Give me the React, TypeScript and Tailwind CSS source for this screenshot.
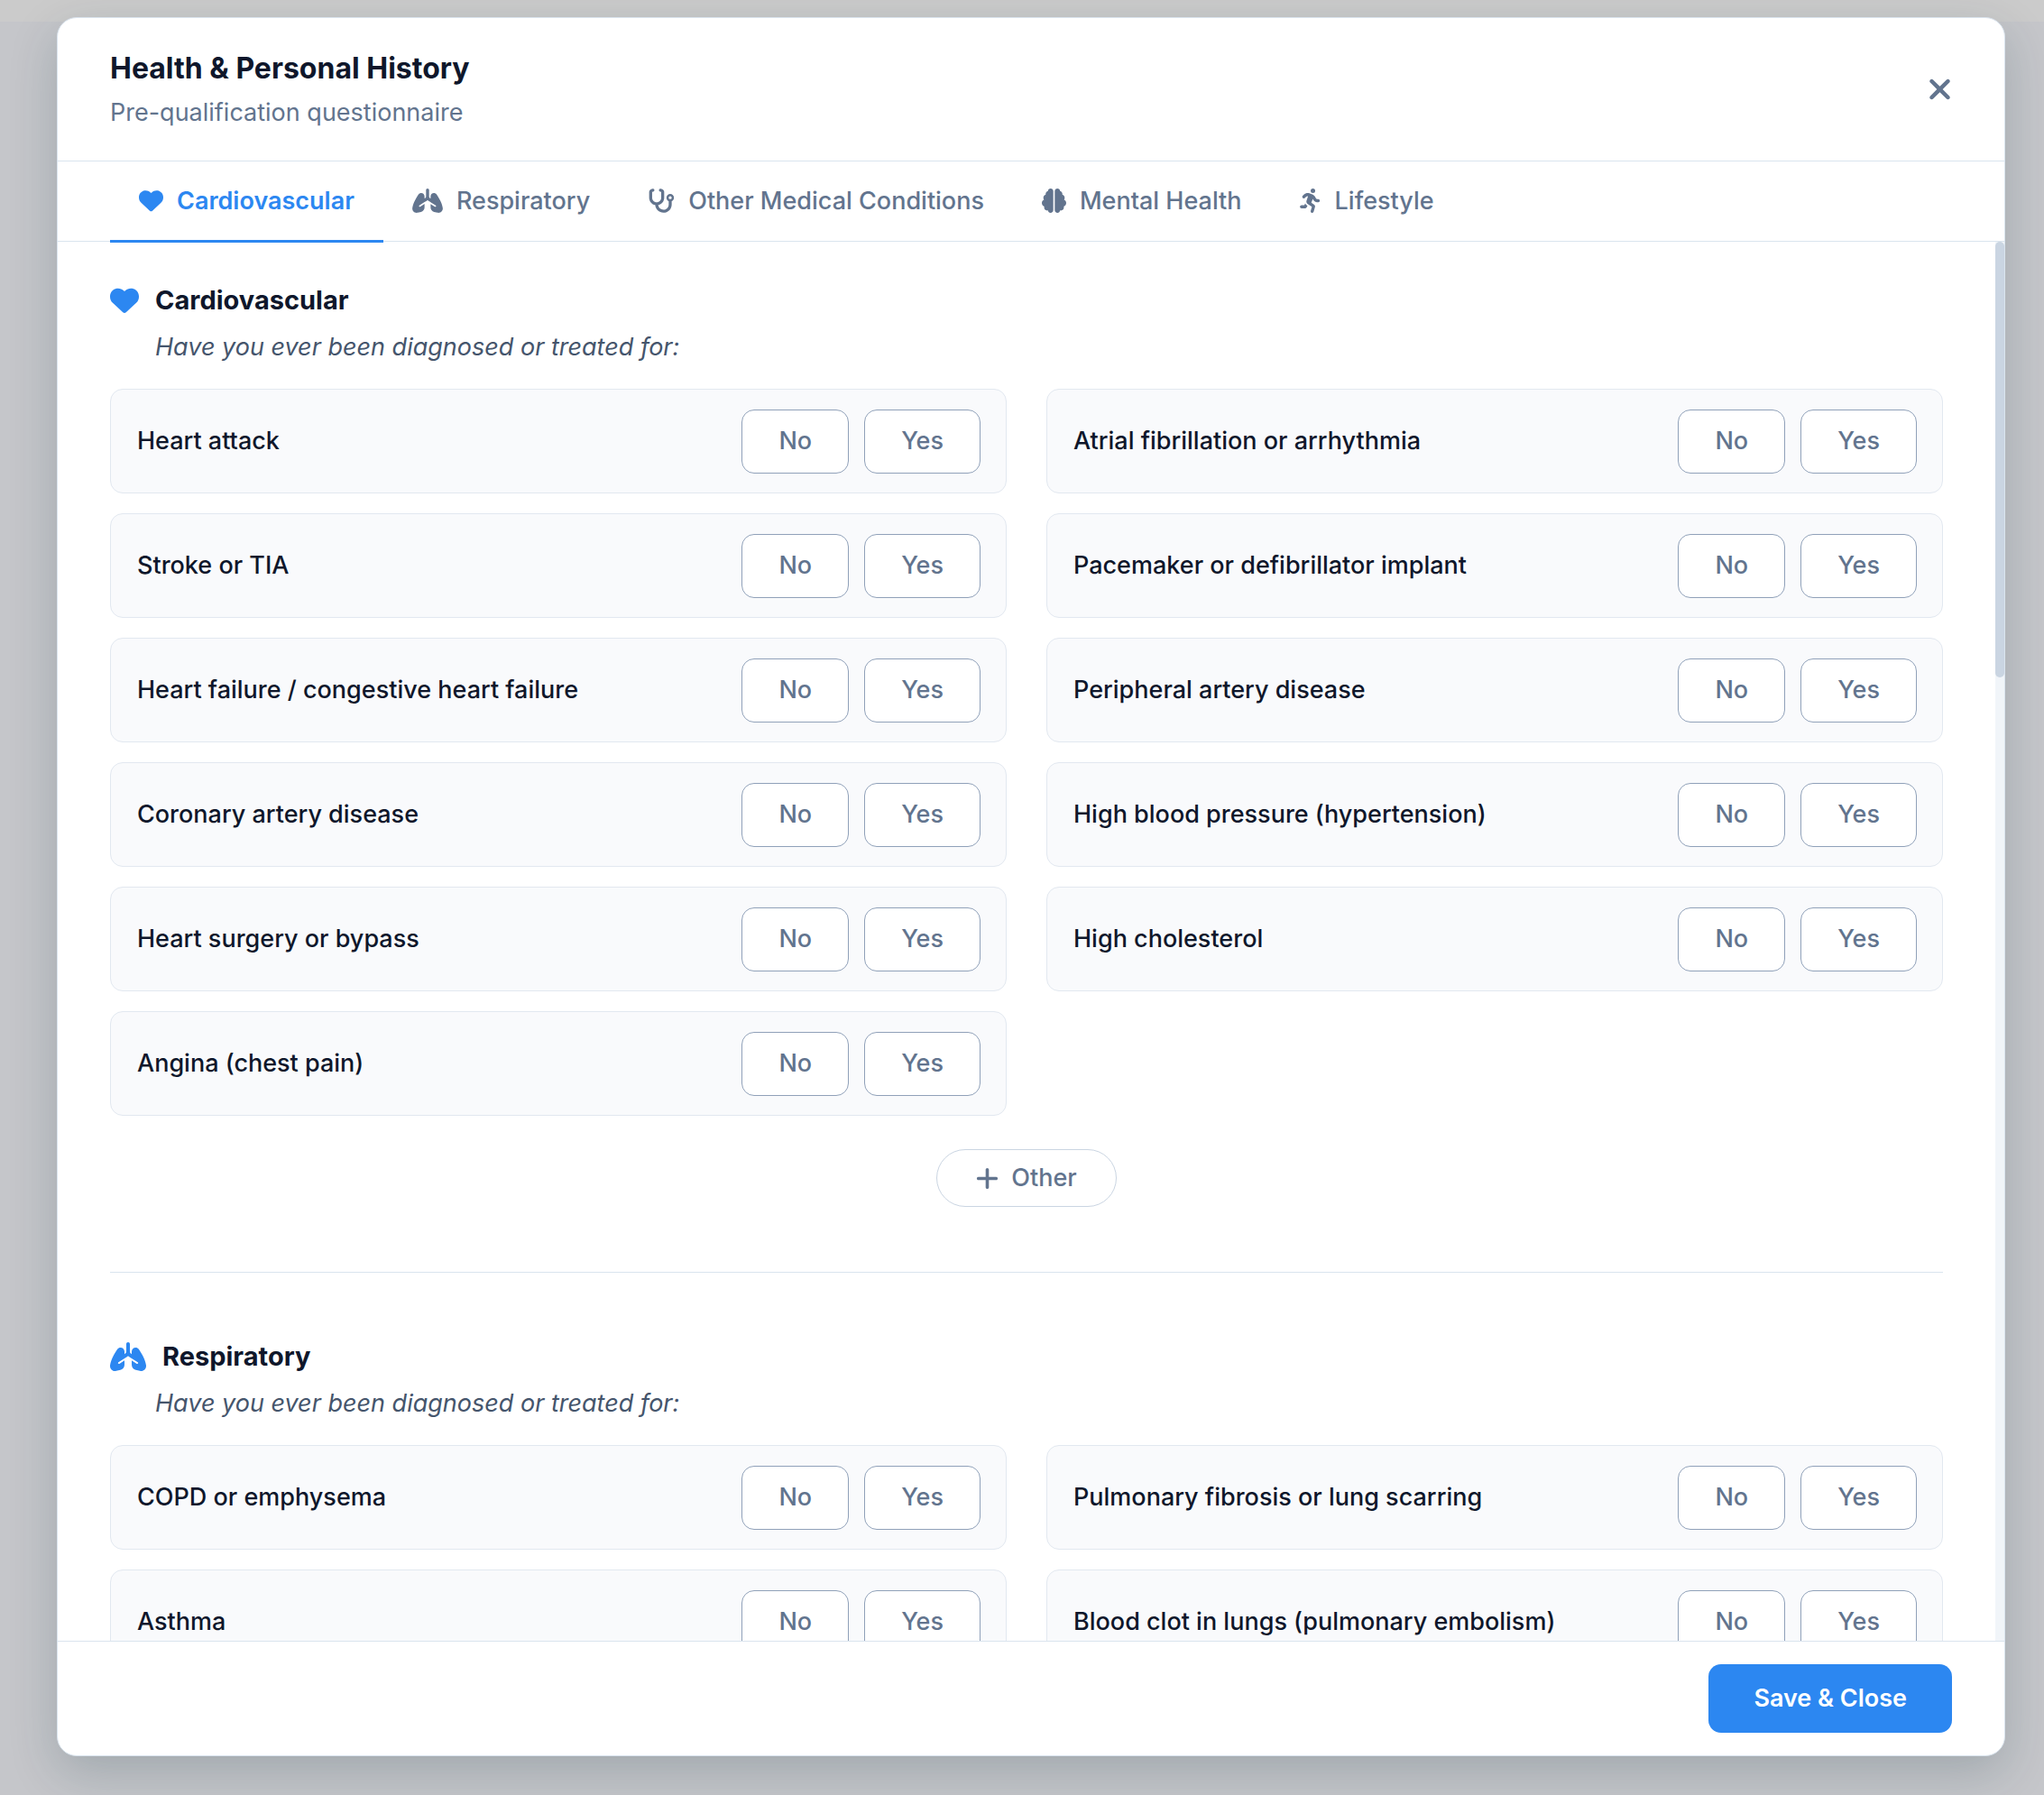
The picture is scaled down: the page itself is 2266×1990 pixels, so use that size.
import React, { useState } from "react";
import {
  FaBrain,
  FaHeart,
  FaLungs,
  FaPersonRunning,
  FaPlus,
  FaStethoscope,
  FaXmark,
} from "react-icons/fa6";
import type { IconType } from "react-icons";

type Answer = "No" | "Yes";

// The glyphs are not all square, so each one carries its own width
const tabs: { label: string; icon: IconType; iconWidth: string }[] = [
  { label: "Cardiovascular", icon: FaHeart, iconWidth: "w-[27px]" },
  { label: "Respiratory", icon: FaLungs, iconWidth: "w-[34px]" },
  { label: "Other Medical Conditions", icon: FaStethoscope, iconWidth: "w-[30px]" },
  { label: "Mental Health", icon: FaBrain, iconWidth: "w-[27px]" },
  { label: "Lifestyle", icon: FaPersonRunning, iconWidth: "w-[24px]" },
];

// Questions read down the left column first, then the right one
const sections: {
  title: string;
  icon: IconType;
  iconWidth: string;
  left: string[];
  right: string[];
}[] = [
  {
    title: "Cardiovascular",
    icon: FaHeart,
    iconWidth: "w-[32px]",
    left: [
      "Heart attack",
      "Stroke or TIA",
      "Heart failure / congestive heart failure",
      "Coronary artery disease",
      "Heart surgery or bypass",
      "Angina (chest pain)",
    ],
    right: [
      "Atrial fibrillation or arrhythmia",
      "Pacemaker or defibrillator implant",
      "Peripheral artery disease",
      "High blood pressure (hypertension)",
      "High cholesterol",
    ],
  },
  {
    title: "Respiratory",
    icon: FaLungs,
    iconWidth: "w-[40px]",
    left: ["COPD or emphysema", "Asthma"],
    right: ["Pulmonary fibrosis or lung scarring", "Blood clot in lungs (pulmonary embolism)"],
  },
];

function QuestionRow({
  label,
  value,
  onChange,
}: {
  label: string;
  value?: Answer;
  onChange: (answer: Answer) => void;
}) {
  return (
    <div
      role="group"
      aria-label={label}
      className="flex h-[116px] items-center justify-between rounded-[14px] border border-slate-200 bg-[#f9fafc] pr-7 pl-[29px]"
    >
      <span className="font-medium text-slate-900">{label}</span>
      <div className="flex gap-[17px]">
        {(["No", "Yes"] as Answer[]).map((answer) => (
          <button
            key={answer}
            type="button"
            aria-pressed={value === answer}
            onClick={() => onChange(answer)}
            className={`h-[71px] cursor-pointer rounded-[14px] border px-10 font-medium ${
              value === answer
                ? "border-[#2c87f1] bg-[#2c87f1] text-white"
                : "border-slate-400 bg-white text-slate-500"
            }`}
          >
            {answer}
          </button>
        ))}
      </div>
    </div>
  );
}

export default function App() {
  const [activeTab, setActiveTab] = useState("Cardiovascular");
  const [answers, setAnswers] = useState<Record<string, Answer>>({});

  const renderQuestion = (label: string) => (
    <QuestionRow
      key={label}
      label={label}
      value={answers[label]}
      onChange={(answer) => setAnswers((prev) => ({ ...prev, [label]: answer }))}
    />
  );

  return (
    <div className="h-screen bg-[linear-gradient(#cbcbcb_24px,#c5c6ca_24px)] pt-[19px] pr-[43px] pb-[43px] pl-[63px] font-['Inter',sans-serif] text-[27px] leading-10">
      <div
        role="dialog"
        aria-labelledby="dialog-title"
        className="flex h-full flex-col overflow-hidden rounded-[22px] border border-[#dae4ee] bg-white shadow-[0_18px_54px_rgba(15,50,60,0.2)]"
      >
        {/* Header */}
        <header className="flex shrink-0 items-center justify-between border-b border-[#dae4ee] px-[58px] pt-8 pb-[33px]">
          <div>
            <h1 id="dialog-title" className="text-[32px] leading-[48px] font-bold text-slate-900">
              Health &amp; Personal History
            </h1>
            <p className="mt-[5px] text-slate-500">Pre-qualification questionnaire</p>
          </div>
          <button type="button" aria-label="Close" className="cursor-pointer text-slate-500">
            <FaXmark className="h-9 w-[27px]" />
          </button>
        </header>

        {/* Tabs */}
        <nav role="tablist" className="flex shrink-0 border-b border-[#dae4ee] px-[58px]">
          {tabs.map(({ label, icon: Icon, iconWidth }) => (
            <button
              key={label}
              type="button"
              role="tab"
              aria-selected={activeTab === label}
              onClick={() => setActiveTab(label)}
              className={`-mb-0.5 flex h-[90px] cursor-pointer items-center gap-[15px] border-b-[3px] px-8 ${
                activeTab === label
                  ? "border-[#2c87f1] font-semibold text-[#2c87f1]"
                  : "border-transparent font-medium text-slate-500"
              }`}
            >
              <Icon className={`h-[27px] ${iconWidth}`} />
              {label}
            </button>
          ))}
        </nav>

        {/* Body */}
        <div className="flex min-h-0 flex-1">
          <main className="min-w-0 flex-1 overflow-hidden px-[58px]">
            {sections.map(({ title, icon: Icon, iconWidth, left, right }) => (
              <section key={title} className="border-b border-[#dae4ee] pt-[72px] pb-[72px] first:pt-11">
                <h2 className="flex h-[42px] items-center gap-[18px] text-[29px] font-bold text-slate-900">
                  <Icon className={`h-[32px] text-[#2c87f1] ${iconWidth}`} />
                  {title}
                </h2>
                <p className="mt-[11px] mb-[26px] pl-[50px] text-slate-600 italic">
                  Have you ever been diagnosed or treated for:
                </p>
                <div className="grid grid-cols-2 gap-x-11">
                  <div className="flex flex-col gap-[22px]">{left.map(renderQuestion)}</div>
                  <div className="flex flex-col gap-[22px]">{right.map(renderQuestion)}</div>
                </div>
                <div className="mt-[37px] flex justify-center">
                  <button
                    type="button"
                    className="flex h-16 cursor-pointer items-center gap-3.5 rounded-full border border-slate-300 px-[43px] font-medium text-slate-500"
                  >
                    <FaPlus className="h-[29px] w-[25px]" />
                    Other
                  </button>
                </div>
              </section>
            ))}
          </main>
          <div className="w-2.5 shrink-0 bg-slate-100">
            <div className="h-[483px] rounded-full bg-slate-300" />
          </div>
        </div>

        {/* Footer */}
        <footer className="flex shrink-0 justify-end border-t border-[#dae4ee] px-[58px] py-[25px]">
          <button
            type="button"
            className="h-[76px] cursor-pointer rounded-[14px] bg-[#2c87f1] px-[50px] font-semibold text-white"
          >
            Save &amp; Close
          </button>
        </footer>
      </div>
    </div>
  );
}
